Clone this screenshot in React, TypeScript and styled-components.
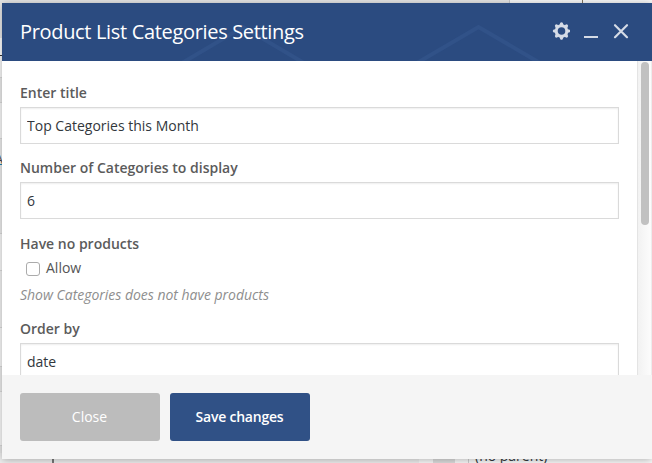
import React from "react";
import styled, { createGlobalStyle } from "styled-components";

const Global = createGlobalStyle`
  * { box-sizing: border-box; }
  html, body { margin: 0; overflow: hidden; }
  body { font-family: "Open Sans", sans-serif; background: #e9e9e9; }
`;

const Page = styled.div`
  position: relative;
  width: 652px;
  height: 463px;
  overflow: hidden;
  background: #e9e9e9;
`;

const Backdrop = styled.div`
  height: 100%;
  display: flex;
  flex-direction: column;
`;

const TopStrip = styled.div`
  height: 3px;
  flex: none;
  display: grid;
  grid-template-columns: 510px 73px 1fr;
`;

const TopCell = styled.div<{ $light?: boolean; $edge?: string }>`
  background: ${(p) => (p.$light ? "#f8f8f8" : "#e6e6e6")};
  border-right: ${(p) => (p.$edge ? `1px solid ${p.$edge}` : "0")};
`;

const PageRow = styled.div<{ $h: number; $bg: string; $line?: string }>`
  height: ${(p) => p.$h}px;
  flex: none;
  background: ${(p) => p.$bg};
  border-bottom: 1px solid ${(p) => p.$line ?? "#dcdcdc"};
`;

const LinkRow = styled(PageRow)`
  display: flex;
  align-items: flex-end;
  justify-content: flex-start;
`;

const LinkEdge = styled.span`
  width: 3px;
  height: 10px;
  overflow: hidden;
  display: flex;
  justify-content: flex-end;
  border-bottom: 1px solid #2382b0;
  color: #444;
  font-size: 12px;
  line-height: 9px;
`;

const BottomRow = styled.div`
  flex: 1;
  display: grid;
  grid-template-columns: 52px 2px 365px 14px 22px 13px 1fr;
  align-items: end;
`;

const BottomCell = styled.div<{ $bg: string }>`
  height: 10px;
  background: ${(p) => p.$bg};
`;

const ParentCell = styled(BottomCell)`
  height: 16px;
  border-left: 1px solid #cfcfcf;
  padding-left: 6px;
  color: #32373c;
  font-size: 14px;
  line-height: 18px;
`;

/* The dialog floats over the page behind it. */
const Dialog = styled.section`
  position: absolute;
  inset: 3px 0 4px 2px;
  display: flex;
  flex-direction: column;
  background: #fff;
  box-shadow: 0 1px 8px rgba(0, 0, 0, 0.3);
`;

const Header = styled.header`
  position: relative;
  height: 58px;
  flex: none;
  display: flex;
  align-items: center;
  justify-content: space-between;
  padding: 0 22px 0 18px;
  background: #2b4b80;
`;

const Pattern = styled.svg`
  position: absolute;
  inset: 0;
`;

const Title = styled.h1`
  position: relative;
  margin: 0 0 1px;
  font-size: 20px;
  line-height: 28px;
  font-weight: 400;
  letter-spacing: -0.33px;
  color: #fff;
`;

const Actions = styled.div`
  position: relative;
  display: flex;
  gap: 12px;
  margin-bottom: 2px;
`;

const IconButton = styled.button`
  width: 18px;
  height: 18px;
  padding: 0;
  border: 0;
  background: none;
  color: #d5dbe6;
  svg { display: block; }
`;

const Body = styled.div`
  height: 314px;
  flex: none;
  display: flex;
  overflow: hidden;
`;

const Form = styled.div`
  width: 635px;
  padding: 22px 18px 0;
`;

const Field = styled.div<{ $h: number }>`
  height: ${(p) => p.$h}px;
`;

const Label = styled.label`
  display: block;
  height: 24px;
  font-size: 14px;
  line-height: 20px;
  font-weight: 600;
  color: #5b5b5b;
`;

const Input = styled.input`
  display: block;
  width: 599px;
  height: 37px;
  padding: 0 6px 1px;
  border: 1px solid #dadada;
  border-radius: 0;
  outline: 0;
  box-shadow: inset 0 1px 2px rgba(0, 0, 0, 0.07);
  font: 400 14px "Open Sans", sans-serif;
  color: #32373c;
  background: #fff;
`;

const CheckRow = styled.label`
  display: flex;
  align-items: center;
  height: 20px;
  padding-left: 6px;
  gap: 6px;
  font-size: 14px;
  line-height: 20px;
  color: #555;
`;

const Checkbox = styled.input`
  appearance: none;
  width: 14px;
  height: 14px;
  margin: 2px 0 0;
  border: 1px solid #ababab;
  border-radius: 3px;
  background: #fff;
`;

const Hint = styled.p`
  margin: 7px 0 0;
  font-size: 14px;
  line-height: 20px;
  font-style: italic;
  letter-spacing: -0.02px;
  color: #8e8e8e;
`;

const Track = styled.div`
  width: 15px;
  padding: 1px 0 0 3px;
  border-left: 1px solid #e4e4e4;
  border-right: 1px solid #ededed;
  background: linear-gradient(90deg, #f2f2f2, #fcfcfc);
`;

const Thumb = styled.div`
  width: 8px;
  height: 163px;
  border-radius: 4px;
  background: #c1c1c1;
`;

const Footer = styled.footer`
  height: 84px;
  display: flex;
  gap: 10px;
  padding: 18px;
  background: #f5f5f5;
`;

const Button = styled.button<{ $primary?: boolean }>`
  width: 140px;
  height: 48px;
  padding: 0 1px 2px 0;
  border: 0;
  border-radius: 3px;
  font: 400 14px "Open Sans", sans-serif;
  font-weight: ${(p) => (p.$primary ? 600 : 400)};
  letter-spacing: ${(p) => (p.$primary ? "-0.22px" : "0")};
  color: #fff;
  background: ${(p) => (p.$primary ? "#305186" : "#bcbcbc")};
`;

const teeth = [0, 45, 90, 135, 180, 225, 270, 315];

export default function App() {
  return (
    <>
      <Global />
      <Page>
        <Backdrop aria-hidden="true">
          <TopStrip>
            <TopCell $edge="#c8c8c8" />
            <TopCell $light $edge="#80735e" />
            <TopCell $light />
          </TopStrip>
          <PageRow $h={35} $bg="#e9e9e9" $line="#e9e9e9" />
          <PageRow $h={18} $bg="#fff" $line="#333" />
          <PageRow $h={22} $bg="#fafafa" />
          <PageRow $h={25} $bg="#ececec" />
          <PageRow $h={36} $bg="#fafafa" />
          <LinkRow $h={27} $bg="#ededed" $line="#ededed">
            <LinkEdge>A</LinkEdge>
          </LinkRow>
          <PageRow $h={68} $bg="#ededed" />
          <PageRow $h={37} $bg="#fafafa" />
          <PageRow $h={57} $bg="#f3f3f3" />
          <PageRow $h={39} $bg="#fafafa" />
          <PageRow $h={25} $bg="#ececec" />
          <PageRow $h={54} $bg="#fafafa" />
          <BottomRow>
            <BottomCell $bg="#efefef" />
            <BottomCell $bg="#777" />
            <BottomCell $bg="#efefef" />
            <BottomCell $bg="#fafafa" />
            <BottomCell $bg="#dedede" />
            <BottomCell $bg="#fafafa" />
            <ParentCell $bg="#fafafa">(no parent)</ParentCell>
          </BottomRow>
        </Backdrop>
        <Dialog role="dialog" aria-label="Product List Categories Settings">
          <Header>
            <Pattern width="650" height="58" fill="none" stroke="#315288" strokeWidth="4">
              <path d="M180 60 241 24 302 60M415 60 476.500 24 538 60" />
            </Pattern>
            <Title>Product List Categories Settings</Title>
            <Actions>
              <IconButton aria-label="Settings">
                <svg width="18" height="18" viewBox="0 0 18 18">
                  <circle cx="9.500" cy="9" r="5.300" fill="none" stroke="currentColor" strokeWidth="3" />
                  {teeth.map((a) => (
                    <path
                      key={a}
                      d="M7.400 3.300 8.300 .8Q9.500 -.3 10.700 .8L11.600 3.300Z"
                      fill="currentColor"
                      transform={`rotate(${a} 9.500 9)`}
                    />
                  ))}
                </svg>
              </IconButton>
              <IconButton aria-label="Minimize">
                <svg width="18" height="18" viewBox="0 0 18 18">
                  <path d="M2 15h14" stroke="currentColor" strokeWidth="2" />
                </svg>
              </IconButton>
              <IconButton aria-label="Close dialog">
                <svg width="18" height="18" viewBox="0 0 18 18">
                  <path d="M3 3.200 15 15.200M15 3.200 3 15.200" stroke="currentColor" strokeWidth="2.200" strokeLinecap="round" />
                </svg>
              </IconButton>
            </Actions>
          </Header>
          <Body>
            <Form>
              <Field $h={75}>
                <Label>Enter title</Label>
                <Input defaultValue="Top Categories this Month" />
              </Field>
              <Field $h={76}>
                <Label>Number of Categories to display</Label>
                <Input defaultValue="6" />
              </Field>
              <Field $h={85}>
                <Label>Have no products</Label>
                <CheckRow>
                  <Checkbox type="checkbox" />
                  Allow
                </CheckRow>
                <Hint>Show Categories does not have products</Hint>
              </Field>
              <Field $h={75}>
                <Label>Order by</Label>
                <Input defaultValue="date" />
              </Field>
            </Form>
            <Track>
              <Thumb />
            </Track>
          </Body>
          <Footer>
            <Button>Close</Button>
            <Button $primary>Save changes</Button>
          </Footer>
        </Dialog>
      </Page>
    </>
  );
}
